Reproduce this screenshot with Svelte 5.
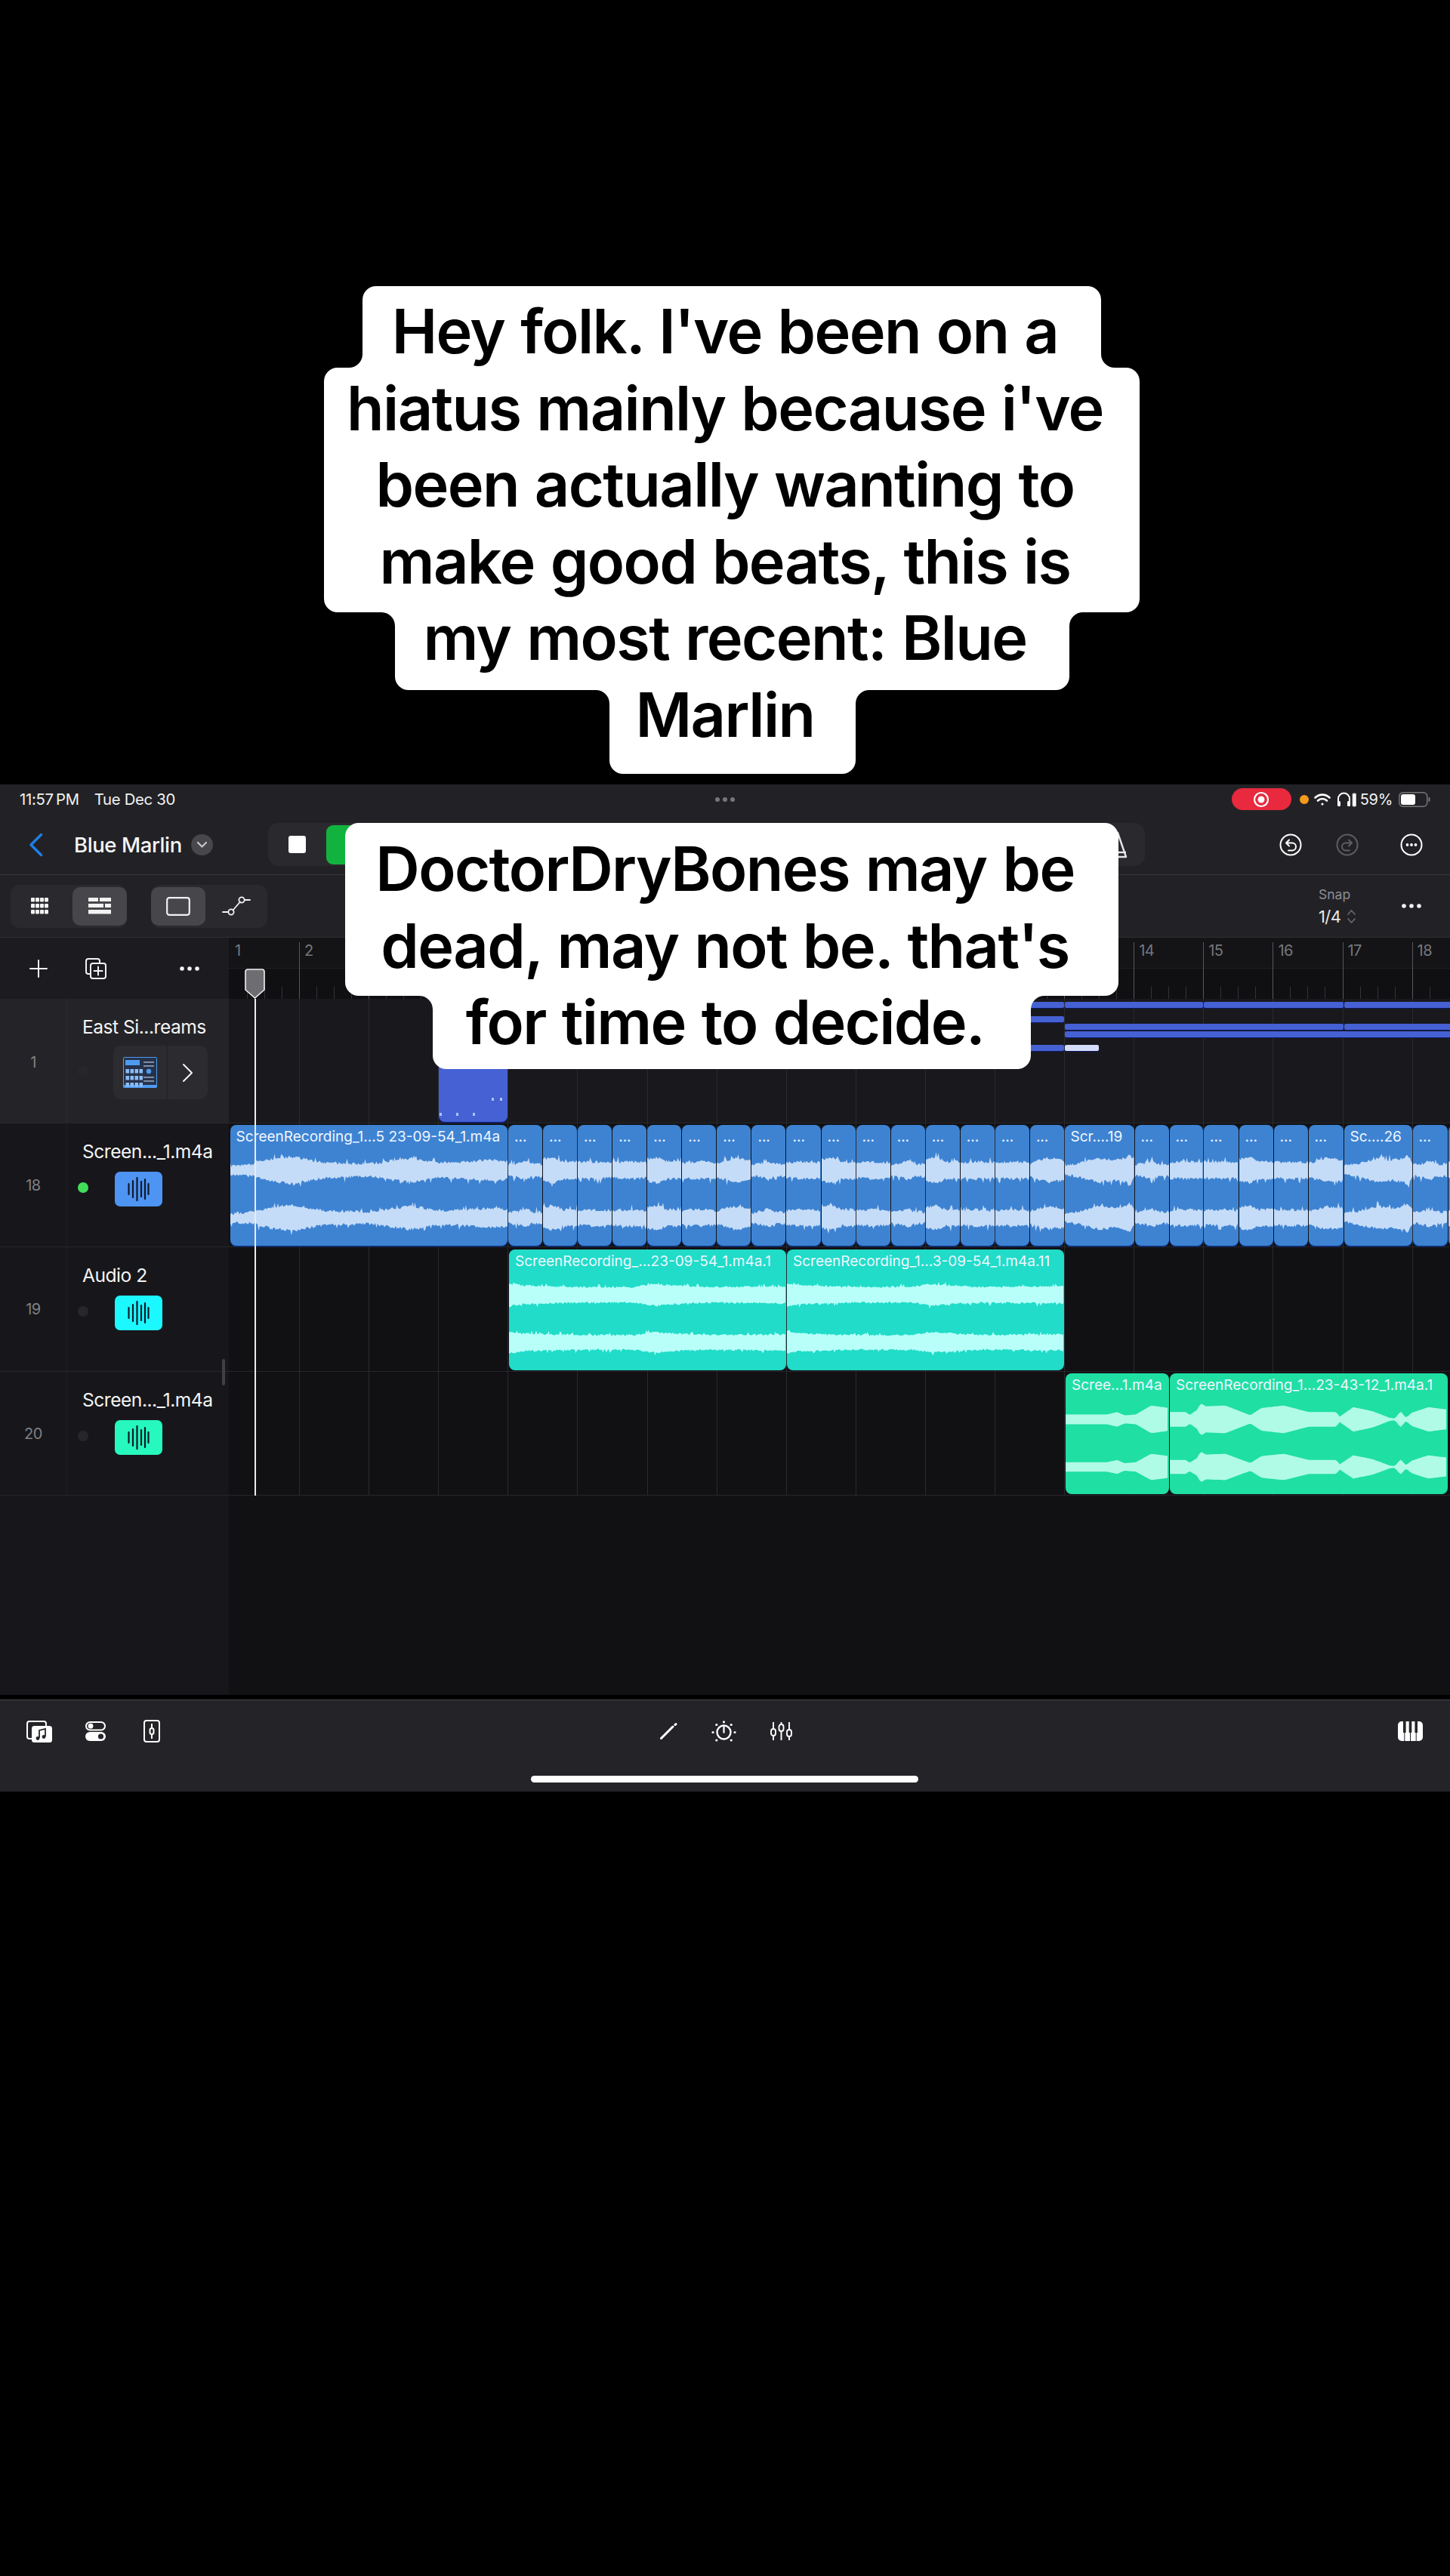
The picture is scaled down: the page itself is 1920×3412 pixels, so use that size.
<script>
  const BAR = 92.1;
  const ORIGIN = 303;
  const barX = (n) => 303.9 + (n - 1) * BAR - ORIGIN;

  function rng(seed) {
    let s = seed * 7919 + 13;
    return () => {
      s = (s * 16807) % 2147483647;
      return s / 2147483647;
    };
  }
  function envAt(env, t) {
    for (let i = 1; i < env.length; i++) {
      if (t <= env[i][0]) {
        const [t0, v0] = env[i - 1];
        const [t1, v1] = env[i];
        return v0 + ((v1 - v0) * (t - t0)) / (t1 - t0 || 1);
      }
    }
    return env[env.length - 1][1];
  }
  function wavePath(w, env, cy, seed, kind) {
    const r = rng(seed);
    const step = kind === 'green' ? 3 : 1.5;
    const amp = kind === 'blue' ? 4 : kind === 'teal' ? 2.5 : 0;
    const gain = kind === 'blue' ? 1.1 : kind === 'green' ? 1.08 : 1;
    const top = [];
    const bot = [];
    for (let x = 0; x <= w + 0.01; x += step) {
      const base = envAt(env, x / w) * gain;
      const a = (r() - 0.4) * amp + (amp && r() < 0.06 ? amp * 1.3 : 0);
      const b = (r() - 0.4) * amp + (amp && r() < 0.06 ? amp * 1.3 : 0);
      top.push(`${x.toFixed(1)} ${(cy - base - a).toFixed(1)}`);
      bot.push(`${x.toFixed(1)} ${(cy + base + b).toFixed(1)}`);
    }
    return 'M' + top.join('L') + 'L' + bot.reverse().join('L') + 'Z';
  }

  const A = [[0, 6], [0.3, 8], [0.5, 11], [0.7, 7], [1, 7]];
  const B = [[0, 9], [0.5, 10], [1, 9]];
  const C = [[0, 13], [0.3, 15], [0.6, 10], [1, 10]];
  const D = [[0, 8], [0.5, 14], [1, 12]];
  const LONG = [[0, 5], [0.2, 8], [0.5, 14], [0.7, 12], [0.88, 14], [0.93, 19], [1, 9]];
  const FIRST = [[0, 5], [0.09, 7], [0.1, 9], [0.15, 13], [0.22, 16], [0.27, 13], [0.33, 9], [0.5, 7], [0.64, 14], [0.68, 13], [0.73, 9], [0.8, 9], [0.95, 12], [1, 10]];
  const TEAL = [[0, 15], [0.05, 12], [0.25, 10], [0.45, 10], [0.52, 14], [0.6, 12], [0.7, 10], [1, 11]];
  const G1 = [[0, 6], [0.4, 6], [0.5, 9], [0.57, 5], [0.68, 6], [0.83, 17], [1, 14]];
  const G2 = [[0, 9], [0.06, 9], [0.07, 5], [0.1, 12], [0.11, 20], [0.13, 16], [0.2, 17], [0.29, 5], [0.33, 14], [0.41, 17], [0.5, 9], [0.6, 9], [0.61, 3], [0.66, 15], [0.73, 10], [0.79, 2], [0.81, 1], [0.83, 10], [0.85, 2], [0.87, 8], [0.93, 15], [1, 12]];

  const blueEdges = [];
  const halfEnvs = [A, C, B, B, C, B, D, A, B, C, B, A, C, B, B, D];
  for (let i = 0; i < 16; i++) {
    const x = 672.5 + i * 46.06;
    blueEdges.push({ x, end: x + 46.06, label: '...', env: halfEnvs[i] });
  }
  const tail = [
    { x: 1409, end: 1502, label: 'Scr....19', env: LONG },
    { x: 1502, end: 1548, label: '...', env: A },
    { x: 1548, end: 1593.5, label: '...', env: B },
    { x: 1593.5, end: 1640, label: '...', env: B },
    { x: 1640, end: 1686, label: '...', env: C },
    { x: 1686, end: 1732, label: '...', env: B },
    { x: 1732, end: 1779, label: '...', env: D },
    { x: 1779, end: 1870, label: 'Sc....26', env: LONG },
    { x: 1870, end: 1917, label: '...', env: A },
    { x: 1917.5, end: 1964, label: '', env: B }
  ];

  const build = (list, kind, top, cys) =>
    list.map((c, i) => {
      const w = c.end - c.x - 1;
      return {
        ...c,
        kind,
        top,
        w,
        left: c.x - ORIGIN + 0.5,
        p1: wavePath(w, c.env, cys[0], i * 3 + 11 + top, kind),
        p2: wavePath(w, c.env.map(([t, v]) => [t, v * 0.95]), cys[1], i * 5 + 29 + top, kind)
      };
    });

  const clips = [
    ...build([{ x: 304, end: 672.5, label: 'ScreenRecording_1...5 23-09-54_1.m4a', env: FIRST }, ...blueEdges, ...tail], 'blue', 167, [60, 123]),
    ...build(
      [
        { x: 673.5, end: 1041, label: 'ScreenRecording_...23-09-54_1.m4a.1', env: TEAL },
        { x: 1041.5, end: 1409.5, label: 'ScreenRecording_1...3-09-54_1.m4a.11', env: TEAL }
      ],
      'teal', 332, [60, 123]
    ),
    ...build(
      [
        { x: 1410.5, end: 1548, label: 'Scree...1.m4a', env: G1 },
        { x: 1548.5, end: 1917.5, label: 'ScreenRecording_1...23-43-12_1.m4a.1', env: G2 }
      ],
      'green', 496, [61, 124]
    )
  ];

  const bars = Array.from({ length: 18 }, (_, i) => i + 1);
  const visibleNums = bars.filter((n) => n < 3 || n > 13);
  const ticks = [];
  for (let i = 0; i < 70; i++) {
    if (i % 4 !== 0) ticks.push(303.9 + (i * BAR) / 4 - ORIGIN);
  }

  const midi = [
    { x: 1360, end: 1409, y: 1327, c: 'n' },
    { x: 1410, end: 1593, y: 1327, c: 'n' },
    { x: 1594, end: 1779, y: 1327, c: 'n' },
    { x: 1780, end: 1930, y: 1327, c: 'n' },
    { x: 1360, end: 1409, y: 1346, c: 'n' },
    { x: 1410, end: 1779, y: 1356, c: 'n' },
    { x: 1780, end: 1930, y: 1356, c: 'n' },
    { x: 1410, end: 1930, y: 1366, c: 'n' },
    { x: 1360, end: 1409, y: 1384, c: 'n' },
    { x: 1410, end: 1455, y: 1384, c: 'sel' }
  ];

  const noteDots = [
    [651, 1454], [662, 1454], [582, 1474], [604, 1474], [626, 1474]
  ];

  const rows = [
    { num: 18, name: 'Screen..._1.m4a', dot: 'on', color: '#4e94f3' },
    { num: 19, name: 'Audio 2', dot: '', color: '#1cf8ff' },
    { num: 20, name: 'Screen..._1.m4a', dot: '', color: '#26f8be' }
  ];
  const waveBars = [[1.5, 14], [7, 22], [12.5, 30], [18, 20], [23, 26], [27.5, 14]];

  const firstLines = ["Hey folk. I've been on a", "hiatus mainly because i've", 'been actually wanting to', 'make good beats, this is', 'my most recent: Blue', 'Marlin'];
  const secondLines = ['DoctorDryBones may be', "dead, may not be. that's", 'for time to decide.'];

  function roundedPath(pts, r) {
    let d = '';
    const n = pts.length;
    for (let i = 0; i < n; i++) {
      const p = pts[(i + n - 1) % n];
      const v = pts[i];
      const q = pts[(i + 1) % n];
      const l1 = Math.hypot(v[0] - p[0], v[1] - p[1]);
      const l2 = Math.hypot(q[0] - v[0], q[1] - v[1]);
      const rr = Math.min(r, l1 / 2, l2 / 2);
      const a = [v[0] + ((p[0] - v[0]) / l1) * rr, v[1] + ((p[1] - v[1]) / l1) * rr];
      const b = [v[0] + ((q[0] - v[0]) / l2) * rr, v[1] + ((q[1] - v[1]) / l2) * rr];
      const cross = (v[0] - p[0]) * (q[1] - v[1]) - (v[1] - p[1]) * (q[0] - v[0]);
      d += `${i === 0 ? 'M' : 'L'}${a[0]} ${a[1]}A${rr} ${rr} 0 0 ${cross > 0 ? 1 : 0} ${b[0]} ${b[1]}`;
    }
    return d + 'Z';
  }
  const shape1 = roundedPath([[480, 379], [1458, 379], [1458, 487], [1509, 487], [1509, 811], [1416, 811], [1416, 914], [1133, 914], [1133, 1025], [807, 1025], [807, 914], [523, 914], [523, 811], [429, 811], [429, 487], [480, 487]], 18);
  const shape2 = roundedPath([[457, 1090], [1481, 1090], [1481, 1319], [1365, 1319], [1365, 1416], [573, 1416], [573, 1319], [457, 1319]], 18);

  const padCols = [0, 6, 12, 18];
  const padRows = [0, 5, 10];
</script>

<div class="page">
  <div class="topspace"></div>
  <div class="app">
    <div class="status">
      <div class="time"><span>11:57 PM</span><span class="date">Tue Dec 30</span></div>
      <div class="grabber"><i></i><i></i><i></i></div>
      <div class="sys">
        <div class="rec">
          <svg width="22" height="22" viewBox="0 0 22 22"><circle cx="11" cy="11" r="9" fill="none" stroke="#fff" stroke-width="2.2" /><circle cx="11" cy="11" r="4.5" fill="#fff" /></svg>
        </div>
        <span class="odot"></span>
        <svg width="22" height="18" viewBox="0 0 22 18" fill="none" stroke="#fff" stroke-linecap="round"><path d="M1.5 6.5a13.5 13.5 0 0 1 19 0" stroke-width="2.6" /><path d="M5 10.5a8.5 8.5 0 0 1 12 0" stroke-width="2.6" /><circle cx="11" cy="15" r="1.6" fill="#fff" stroke="none" /></svg>
        <svg class="hp" width="26" height="20" viewBox="0 0 26 20" fill="none"><path d="M2 14V9a7.5 7.5 0 0 1 15 0v5" stroke="#fff" stroke-width="2" /><rect x="1" y="12" width="4" height="7" rx="1.5" fill="#fff" /><rect x="14" y="12" width="4" height="7" rx="1.5" fill="#fff" /><rect x="21" y="2" width="4.5" height="17" rx="1" stroke="#bbb" stroke-width="1" fill="#fff" /></svg>
        <span class="pct">59%</span>
        <svg width="42" height="20" viewBox="0 0 42 20"><rect x="0.75" y="0.75" width="37" height="18.5" rx="5" fill="none" stroke="#77777b" stroke-width="1.5" /><rect x="3" y="3" width="19" height="14" rx="3" fill="#fff" /><rect x="39.5" y="7" width="2" height="6" rx="1" fill="#77777b" /></svg>
      </div>
    </div>

    <div class="header">
      <svg class="back" width="19" height="32" viewBox="0 0 19 32" fill="none"><path d="M16.5 2.5 3 16l13.5 13.5" stroke="#1f7fe8" stroke-width="3.4" stroke-linecap="round" stroke-linejoin="round" /></svg>
      <h1 class="title">Blue Marlin</h1>
      <span class="caret"><svg width="15" height="10" viewBox="0 0 15 10" fill="none"><path d="M2 2l5.5 5.5L13 2" stroke="#c8c8cc" stroke-width="2.2" stroke-linecap="round" stroke-linejoin="round" /></svg></span>
      <div class="transport">
        <span class="stop"></span>
        <span class="play"></span>
        <svg class="metro" width="34" height="40" viewBox="0 0 34 40" fill="none"><path d="M14 4h6l11 32H3z" stroke="#e6e6e8" stroke-width="2.4" stroke-linejoin="round" /><path d="M3 30h28" stroke="#e6e6e8" stroke-width="2.4" /></svg>
      </div>
      <div class="hicons">
        <svg width="30" height="30" viewBox="0 0 30 30" fill="none" stroke="#fff" stroke-width="2"><circle cx="15" cy="15" r="13.5" /><path d="M13 8.5 9 12.5l4 4M9.5 12.5H17a5 5 0 0 1 0 10h-5" stroke-linecap="round" stroke-linejoin="round" /></svg>
        <svg class="redo" width="30" height="30" viewBox="0 0 30 30" fill="none" stroke="#5d5d62" stroke-width="2"><circle cx="15" cy="15" r="13.5" /><path d="M17 8.5l4 4-4 4M20.5 12.5H13a5 5 0 0 0 0 10h5" stroke-linecap="round" stroke-linejoin="round" /></svg>
        <svg class="more" width="30" height="30" viewBox="0 0 30 30"><circle cx="15" cy="15" r="13.5" fill="none" stroke="#fff" stroke-width="2" /><circle cx="9.5" cy="15" r="1.9" fill="#fff" /><circle cx="15" cy="15" r="1.9" fill="#fff" /><circle cx="20.5" cy="15" r="1.9" fill="#fff" /></svg>
      </div>
    </div>

    <div class="toolbar">
      <div class="seg">
        <span class="segbtn">
          <svg width="30" height="22" viewBox="0 0 30 22" fill="#f2f2f2">
            {#each padRows as y}{#each padCols as x}<rect x={x + 1} y={y * 1.6} width="5" height="5.5" rx="1" />{/each}{/each}
          </svg>
        </span>
        <span class="segbtn active">
          <svg width="30" height="22" viewBox="0 0 30 22" fill="#f2f2f2"><rect x="0" y="0" width="13" height="5" /><rect x="15" y="0" width="15" height="5" /><rect x="0" y="8" width="20" height="5" /><rect x="22" y="8" width="8" height="5" /><rect x="0" y="16" width="30" height="5.5" /></svg>
        </span>
      </div>
      <div class="seg second">
        <span class="segbtn active">
          <svg width="32" height="25" viewBox="0 0 32 25" fill="none"><rect x="1.2" y="1.2" width="29.6" height="22.6" rx="3" stroke="#f2f2f2" stroke-width="2.2" /></svg>
        </span>
        <span class="segbtn wide">
          <svg width="38" height="28" viewBox="0 0 38 28" fill="none" stroke="#f2f2f2" stroke-width="1.8"><circle cx="26" cy="6" r="3.6" /><circle cx="12" cy="22" r="3.6" /><path d="M14.5 19.5 24 8.5M30 6h7M1 22h7" stroke-linecap="round" /></svg>
        </span>
      </div>
      <div class="snap">
        <span class="snaplabel">Snap</span>
        <span class="snapval">1/4
          <svg width="13" height="20" viewBox="0 0 13 20" fill="none" stroke="#66666b" stroke-width="1.8" stroke-linecap="round" stroke-linejoin="round"><path d="M2 7l4.5-5L11 7M2 13l4.5 5 4.5-5" /></svg>
        </span>
      </div>
      <svg class="tdots" width="28" height="8" viewBox="0 0 28 8" fill="#f2f2f2"><circle cx="4" cy="4" r="2.8" /><circle cx="14" cy="4" r="2.8" /><circle cx="24" cy="4" r="2.8" /></svg>
    </div>

    <div class="main">
      <div class="tracks">
        <div class="actions">
          <svg width="24" height="24" viewBox="0 0 24 24" stroke="#f2f2f2" stroke-width="2" stroke-linecap="round"><path d="M12 1v22M1 12h22" /></svg>
          <svg class="dup" width="30" height="30" viewBox="0 0 30 30" fill="none" stroke="#f2f2f2" stroke-width="2"><path d="M7 22H5a3 3 0 0 1-3-3V5a3 3 0 0 1 3-3h12a3 3 0 0 1 3 3v2" /><rect x="8" y="8" width="20" height="20" rx="3" /><path d="M18 12.5v11M12.5 18h11" stroke-linecap="round" /></svg>
          <svg class="adots" width="28" height="8" viewBox="0 0 28 8" fill="#f2f2f2"><circle cx="4" cy="4" r="2.8" /><circle cx="14" cy="4" r="2.8" /><circle cx="24" cy="4" r="2.8" /></svg>
        </div>

        <div class="row selected">
          <div class="num numtop">1</div>
          <div class="body">
            <div class="name">East Si...reams</div>
            <div class="ctl">
              <span class="dot"></span>
              <div class="inst">
                <span class="insticon">
                  <svg width="45" height="41" viewBox="0 0 45 41">
                    <rect x="0.5" y="0.5" width="44" height="40" rx="1" fill="#26324a" stroke="#4f9bf0" />
                    <rect x="3" y="4" width="19" height="7" fill="#4f9bf0" />
                    <rect x="0.5" y="37" width="44" height="3.5" fill="#4f9bf0" />
                    {#each padRows as y}{#each padCols as x}<rect x={x + 3.5} y={y * 1.8 + 16} width="4.5" height="5.5" fill="#8cbcf4" />{/each}{/each}
                    {#each [6, 11, 26, 31] as y}<rect x="27" y={y} width="14" height="1.8" fill="#8a98ac" />{/each}
                    <circle cx="34" cy="19" r="3.2" fill="#4f9bf0" />
                  </svg>
                </span>
                <span class="instnext">
                  <svg width="15" height="26" viewBox="0 0 15 26" fill="none"><path d="M2 2l11 11L2 24" stroke="#f2f2f2" stroke-width="2" stroke-linecap="round" stroke-linejoin="round" /></svg>
                </span>
              </div>
            </div>
          </div>
        </div>

        {#each rows as r}
          <div class="row">
            <div class="num">{r.num}</div>
            <div class="body">
              <div class="name">{r.name}</div>
              <div class="ctl">
                <span class="dot" class:on={r.dot === 'on'}></span>
                <span class="wicon" style="background:{r.color}">
                  <svg width="29" height="32" viewBox="0 0 29 32" stroke="#0e1a28" stroke-width="2.2" stroke-linecap="round">
                    {#each waveBars as b}<line x1={b[0]} x2={b[0]} y1={16 - b[1] / 2} y2={16 + b[1] / 2} />{/each}
                  </svg>
                </span>
              </div>
            </div>
          </div>
        {/each}
        <div class="scrollthumb"></div>
      </div>

      <div class="timeline">
        <div class="ruler">
          <div class="rulertop"></div>
          <div class="rulerbottom"></div>
          {#each bars as n}
            <span class="barline" class:first={n === 1} style="left:{barX(n)}px"></span>
          {/each}
          {#each visibleNums as n}
            <span class="barnum" style="left:{barX(n) + 7}px">{n}</span>
          {/each}
          {#each ticks as t}
            <span class="tick" style="left:{t}px"></span>
          {/each}
        </div>

        <div class="lane lane1"></div>
        <div class="lane"></div>
        <div class="lane"></div>
        <div class="lane"></div>

        {#each bars.slice(1) as n}
          <span class="grid" style="left:{barX(n)}px"></span>
        {/each}

        <div class="midi">
          <div class="dots">
            {#each noteDots as d}<i style="left:{d[0] - 581}px;top:{d[1] - 1325}px"></i>{/each}
          </div>
        </div>
        {#each midi as m}
          <span class="note" class:sel={m.c === 'sel'} style="left:{m.x - ORIGIN}px;top:{m.y - 1242}px;width:{m.end - m.x}px"></span>
        {/each}

        {#each clips as c}
          <div class="clip {c.kind}" style="left:{c.left}px;top:{c.top + 81}px;width:{c.w}px">
            <svg class="wave" width={c.w} height="160" viewBox="0 0 {c.w} 160">
              <path d={c.p1} />
              <path d={c.p2} />
            </svg>
            <span class="label">{c.label}</span>
          </div>
        {/each}

        <div class="playhead">
          <svg width="27" height="41" viewBox="0 0 27 41"><path d="M4 1h19a3 3 0 0 1 3 3v24L13.5 39 1 28V4a3 3 0 0 1 3-3z" fill="#6e6e72" stroke="#f2f2f2" stroke-width="1.6" /></svg>
          <span class="phline"></span>
        </div>
      </div>
    </div>

    <div class="bottombar">
      <div class="bicons">
        <div class="bleft">
          <svg width="35" height="29" viewBox="0 0 35 29" fill="none"><path d="M7 24H4a3 3 0 0 1-3-3V4a3 3 0 0 1 3-3h19a3 3 0 0 1 3 3v3" stroke="#fff" stroke-width="2" /><rect x="7" y="7" width="27" height="22" rx="3.5" fill="#fff" /><path d="M17 23v-10l8-2v10" stroke="#26262a" stroke-width="1.8" fill="none" /><circle cx="15" cy="23.5" r="2.4" fill="#26262a" /><circle cx="23" cy="21.5" r="2.4" fill="#26262a" /></svg>
          <svg class="gap1" width="27" height="26" viewBox="0 0 27 26"><rect x="1" y="1" width="25" height="10.5" rx="5.25" fill="none" stroke="#fff" stroke-width="2" /><circle cx="7" cy="6.2" r="3.4" fill="#fff" /><rect x="0" y="14" width="27" height="12" rx="6" fill="#fff" /><circle cx="20.5" cy="20" r="3.6" fill="#26262a" /></svg>
          <svg class="gap2" width="22" height="30" viewBox="0 0 22 30" fill="none" stroke="#fff" stroke-width="2"><rect x="1" y="1" width="20" height="28" rx="3" /><path d="M11 5v6M11 19v6" /><rect x="8.5" y="11" width="5" height="8" rx="2.5" /></svg>
        </div>
        <div class="bcenter">
          <svg width="23" height="22" viewBox="0 0 23 22" fill="none" stroke="#fff" stroke-linecap="round"><path d="M1.5 20.5 17 5" stroke-width="3" /><path d="M20 2.5l1 -.8" stroke-width="3" /></svg>
          <svg width="33" height="29" viewBox="0 0 33 29" fill="#fff"><circle cx="16.5" cy="15.5" r="9" fill="none" stroke="#fff" stroke-width="2.4" /><rect x="15.4" y="7.5" width="2.2" height="9" /><circle cx="16.5" cy="1.8" r="1.6" /><circle cx="6.8" cy="5.5" r="1.6" /><circle cx="26.2" cy="5.5" r="1.6" /><circle cx="2" cy="15.5" r="1.6" /><circle cx="31" cy="15.5" r="1.6" /><circle cx="6.8" cy="26" r="1.6" /><circle cx="26.2" cy="26" r="1.6" /></svg>
          <svg width="29" height="24" viewBox="0 0 29 24" fill="none" stroke="#fff" stroke-width="1.9"><path d="M4 0v9M4 18v6M14.5 0v3M14.5 12v12M25 0v10M25 19v5" /><rect x="1" y="9" width="6" height="9" rx="3" /><rect x="11.5" y="3" width="6" height="9" rx="3" /><rect x="22" y="10" width="6" height="9" rx="3" /></svg>
        </div>
        <div class="bright">
          <svg width="33" height="26" viewBox="0 0 33 26"><rect width="33" height="26" rx="5" fill="#fff" /><rect x="7" y="0" width="3.6" height="15" fill="#26262a" /><rect x="14.7" y="0" width="3.6" height="15" fill="#26262a" /><rect x="22.4" y="0" width="3.6" height="15" fill="#26262a" /><path d="M8.8 15v11M16.5 15v11M24.2 15v11" stroke="#26262a" stroke-width="1" /></svg>
        </div>
      </div>
      <div class="home"></div>
    </div>
  </div>

  <svg class="capshapes" width="1920" height="3412" viewBox="0 0 1920 3412">
    <path d={shape1} />
    <path d={shape2} />
  </svg>
  <div class="caption cap1">
    {#each firstLines as l}<div>{l}</div>{/each}
  </div>
  <div class="caption cap2">
    {#each secondLines as l}<div>{l}</div>{/each}
  </div>
</div>

<style>
  :global(body) {
    margin: 0;
    background: #000;
  }
  .page {
    position: relative;
    width: 1920px;
    height: 3412px;
    background: #000;
    overflow: hidden;
    font-family: Inter, "Liberation Sans", sans-serif;
    color: #fff;
  }
  .topspace {
    height: 1039px;
  }
  .app {
    height: 1334px;
    background: #222226;
    display: flex;
    flex-direction: column;
  }
  .status {
    height: 51px;
    display: grid;
    grid-template-columns: 1fr auto 1fr;
    align-items: center;
    padding: 0 26px 12px;
    box-sizing: border-box;
  }
  .time {
    font-size: 20.3px;
    color: #f2f2f2;
    display: flex;
    gap: 20px;
    letter-spacing: -0.3px;
    word-spacing: -2px;
  }
  .date {
    word-spacing: 0;
  }
  .grabber {
    display: flex;
    gap: 4px;
  }
  .grabber i {
    width: 6px;
    height: 6px;
    border-radius: 50%;
    background: #77777b;
  }
  .sys {
    display: flex;
    justify-content: flex-end;
    align-items: center;
  }
  .rec {
    width: 79px;
    height: 29px;
    border-radius: 15px;
    background: #e8293e;
    display: flex;
    align-items: center;
    justify-content: center;
    margin-right: 11px;
  }
  .odot {
    width: 12px;
    height: 12px;
    border-radius: 50%;
    background: #f59a1b;
    margin-right: 7px;
  }
  .hp {
    margin-left: 8px;
  }
  .pct {
    font-size: 20px;
    margin-left: 5px;
    margin-right: 8px;
    color: #f2f2f2;
    letter-spacing: -0.3px;
  }
  .header {
    height: 69px;
    box-sizing: border-box;
    border-bottom: 1px solid #37373b;
    display: flex;
    align-items: center;
    padding: 0 36px 11px 38px;
  }
  .title {
    margin: 0 0 0 41px;
    font-size: 27.5px;
    font-weight: 500;
    letter-spacing: -0.4px;
    color: #f6f6f6;
    white-space: nowrap;
    width: 155px;
    flex: none;
  }
  .caret {
    width: 29px;
    height: 28px;
    flex: none;
    border-radius: 50%;
    background: #47474c;
    display: flex;
    align-items: center;
    justify-content: center;
  }
  .transport {
    width: 1161px;
    height: 57px;
    flex: none;
    margin-left: 73px;
    border-radius: 14px;
    background: #2a2a2e;
    display: flex;
    align-items: center;
  }
  .stop {
    width: 23px;
    height: 23px;
    border-radius: 3px;
    background: #fff;
    margin-left: 27px;
  }
  .play {
    width: 70px;
    height: 52px;
    border-radius: 9px;
    background: #12b23f;
    margin-left: 27px;
  }
  .metro {
    margin-left: auto;
    margin-right: 22px;
  }
  .hicons {
    margin-left: auto;
    display: flex;
    align-items: center;
  }
  .redo {
    margin-left: 45px;
  }
  .more {
    margin-left: 55px;
  }
  .toolbar {
    height: 83px;
    box-sizing: border-box;
    border-bottom: 1px solid #2f2f33;
    display: flex;
    align-items: center;
    padding: 0 37px 0 14px;
  }
  .seg {
    display: flex;
    height: 57px;
    background: #2a2a2e;
    border-radius: 12px;
    width: 154px;
  }
  .second {
    margin-left: 32px;
  }
  .segbtn {
    width: 72px;
    margin: 3px 0;
    border-radius: 10px;
    display: flex;
    align-items: center;
    justify-content: center;
  }
  .seg:not(.second) .segbtn:first-child {
    width: 82px;
  }
  .wide {
    width: 82px;
  }
  .active {
    background: #47474b;
  }
  .snap {
    margin-left: auto;
    display: flex;
    flex-direction: column;
    width: 76px;
    gap: 8px;
    margin-right: 33px;
    margin-top: -1px;
  }
  .snaplabel {
    font-size: 17.5px;
    color: #8e8e92;
    line-height: 20px;
  }
  .snapval {
    font-size: 22px;
    line-height: 22px;
    color: #e8e8e8;
    display: flex;
    align-items: center;
    gap: 8px;
    letter-spacing: -0.6px;
  }
  .main {
    height: 1003px;
    display: flex;
    background: #111114;
  }
  .tracks {
    position: relative;
    width: 303px;
    flex: none;
    background: #17171b;
  }
  .actions {
    height: 81px;
    background: #1c1c20;
    display: flex;
    align-items: center;
    padding: 0 38px 0 39px;
    box-sizing: border-box;
  }
  .dup {
    margin-left: 49px;
  }
  .adots {
    margin-left: auto;
  }
  .row {
    height: 164.5px;
    box-sizing: border-box;
    display: flex;
    border-bottom: 1px solid #27272b;
  }
  .selected {
    background: #242428;
  }
  .num {
    width: 89px;
    flex: none;
    box-sizing: border-box;
    padding-top: 70px;
    line-height: 24px;
    font-size: 20px;
    color: #808084;
    text-align: center;
    border-right: 1px solid #1f1f23;
    letter-spacing: -0.5px;
  }
  .numtop {
    padding-top: 72px;
  }
  .selected .num {
    border-right-color: #2c2c30;
  }
  .body {
    padding: 23px 0 0 20px;
    min-width: 0;
  }
  .name {
    font-size: 24.6px;
    line-height: 28px;
    color: #f4f4f4;
    white-space: nowrap;
    letter-spacing: -0.5px;
  }
  .ctl {
    display: flex;
    align-items: center;
    margin: 13px 0 0 -6px;
  }
  .selected .ctl {
    margin-top: 11px;
  }
  .dot {
    width: 14px;
    height: 14px;
    border-radius: 50%;
    background: #27272b;
    margin-top: -4px;
    flex: none;
  }
  .on {
    background: #43dd5a;
  }
  .wicon {
    width: 63px;
    height: 46px;
    border-radius: 7px;
    margin-left: 35px;
    display: flex;
    align-items: center;
    justify-content: center;
  }
  .inst {
    width: 125px;
    height: 71px;
    margin-left: 33px;
    border-radius: 10px;
    background: #2c2c30;
    display: flex;
  }
  .insticon {
    width: 71px;
    display: flex;
    align-items: center;
    justify-content: center;
    border-right: 1px solid #212125;
  }
  .instnext {
    flex: 1;
    display: flex;
    align-items: center;
    justify-content: center;
  }
  .scrollthumb {
    position: absolute;
    left: 294px;
    top: 558px;
    width: 4px;
    height: 35px;
    border-radius: 2px;
    background: #404045;
  }
  .timeline {
    position: relative;
    flex: 1;
    overflow: hidden;
  }
  .ruler {
    position: relative;
    height: 81px;
  }
  .rulertop {
    height: 41px;
    background: #141417;
    border-bottom: 1px solid #1f1f23;
    box-sizing: border-box;
  }
  .rulerbottom {
    height: 40px;
    background: #101013;
  }
  .barline {
    position: absolute;
    top: 6px;
    bottom: 0;
    width: 1px;
    background: #57575b;
  }
  .barline.first {
    display: none;
  }
  .barnum {
    position: absolute;
    top: 5px;
    font-size: 20px;
    line-height: 24px;
    color: #77777b;
    letter-spacing: -0.6px;
  }
  .tick {
    position: absolute;
    top: 65px;
    bottom: 0;
    width: 1px;
    background: #333337;
  }
  .lane {
    height: 164.5px;
    box-sizing: border-box;
    border-bottom: 1px solid #27272b;
  }
  .lane1 {
    background: #19191d;
  }
  .grid {
    position: absolute;
    top: 81px;
    height: 658px;
    width: 1px;
    background: #2a2a2e;
  }
  .midi {
    position: absolute;
    left: 278px;
    top: 83px;
    width: 91px;
    height: 161px;
    border-radius: 8px;
    background: #4561d4;
    box-shadow: 0 1.5px 0 #0d1f78;
  }
  .dots i {
    position: absolute;
    width: 3px;
    height: 4px;
    background: #a9c4fa;
  }
  .note {
    position: absolute;
    height: 8px;
    border-radius: 2px;
    background: #4561d4;
    box-shadow: 0 1px 0 #0c1a66;
  }
  .note.sel {
    background: #d4dcfa;
  }
  .clip {
    position: absolute;
    height: 160px;
    border-radius: 8px;
    overflow: hidden;
  }
  .blue {
    background: #3e83d2;
    box-shadow: 0 1.5px 0 #0a2f86;
  }
  .blue .wave path {
    fill: #c5dcf8;
  }
  .teal {
    background: #20dcc8;
  }
  .teal .wave path {
    fill: #b8fff9;
  }
  .green {
    background: #1fdfa3;
  }
  .green .wave path {
    fill: #b0fbe5;
  }
  .wave {
    position: absolute;
    left: 0;
    top: 0;
  }
  .label {
    position: relative;
    display: block;
    padding: 6px 0 0 8px;
    font-size: 19px;
    line-height: 20px;
    color: #f0f6ff;
    white-space: nowrap;
  }
  .playhead {
    position: absolute;
    left: 21px;
    top: 41px;
    width: 27px;
    height: 698px;
  }
  .playhead svg {
    display: block;
  }
  .phline {
    position: absolute;
    left: 12.5px;
    top: 40px;
    bottom: 0;
    width: 2px;
    background: #ececec;
  }
  .bottombar {
    flex: 1;
    background: #242428;
    border-top: 6px solid #000;
    position: relative;
    display: flex;
    flex-direction: column;
  }
  .bottombar::before {
    content: "";
    display: block;
    height: 1px;
    background: #47474b;
  }
  .bicons {
    margin-top: 26px;
    height: 30px;
    display: grid;
    grid-template-columns: 1fr auto 1fr;
    align-items: center;
    padding: 0 36px 0 35px;
  }
  .bleft,
  .bcenter {
    display: flex;
    align-items: center;
  }
  .gap1 {
    margin-left: 43px;
  }
  .gap2 {
    margin-left: 50px;
  }
  .bcenter {
    gap: 45px;
    margin-left: 3px;
  }
  .bright {
    display: flex;
    justify-content: flex-end;
  }
  .home {
    width: 513px;
    height: 9px;
    border-radius: 5px;
    background: #fff;
    margin: 44px 0 0 703px;
  }
  .capshapes {
    position: absolute;
    left: 0;
    top: 0;
    fill: #fff;
    pointer-events: none;
  }
  .caption {
    position: absolute;
    left: 0;
    right: 0;
    text-align: center;
    color: #000;
    font-size: 81px;
    font-weight: 600;
    line-height: 101.6px;
    letter-spacing: -1.6px;
    word-spacing: 2px;
    white-space: nowrap;
  }
  .cap1 {
    top: 389px;
  }
  .cap2 {
    top: 1101px;
  }
</style>
